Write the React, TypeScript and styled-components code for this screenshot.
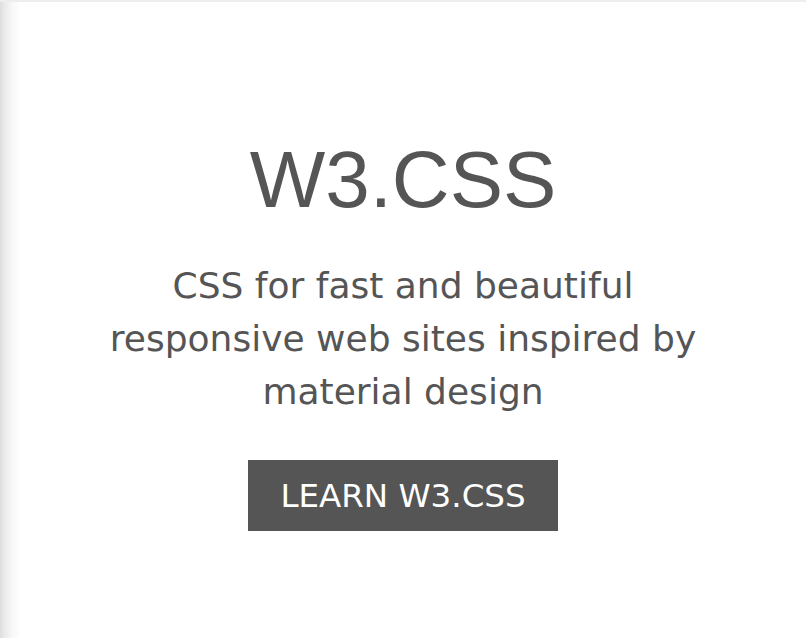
import React from "react";
import styled, { createGlobalStyle } from "styled-components";

const Global = createGlobalStyle`
  html, body {
    margin: 0;
    padding: 0;
    background: #ffffff;
  }
  * { box-sizing: border-box; }
`;

const Page = styled.main`
  min-height: 638px;
  border-top: 2px solid #eeeeee;
  background: linear-gradient(to right, #dedede 0px, #ebebeb 5px, #f7f7f7 12px, #ffffff 21px);
  display: flex;
  flex-direction: column;
  align-items: center;
  padding-top: 130px;
  color: #555555;
  text-align: center;
`;

const Title = styled.h1`
  margin: 0;
  font-family: "Liberation Sans", Arial, sans-serif;
  font-weight: 400;
  font-size: 80px;
  line-height: 96px;
  color: #555555;
`;

const Tagline = styled.p`
  margin: 31px 0 0;
  max-width: 640px;
  font-family: "DejaVu Sans", Verdana, sans-serif;
  font-size: 36px;
  line-height: 53px;
  color: #555555;
`;

const Button = styled.button`
  margin-top: 42px;
  border: none;
  background: #555555;
  color: #ffffff;
  font-family: "DejaVu Sans", Verdana, sans-serif;
  font-size: 32.5px;
  line-height: 47px;
  padding: 13px 32px 11px;
  cursor: pointer;
`;

export default function App() {
  return (
    <>
      <Global />
      <Page>
        <Title>W3.CSS</Title>
        <Tagline>
          CSS for fast and beautiful responsive web sites inspired by material design
        </Tagline>
        <Button>LEARN W3.CSS</Button>
      </Page>
    </>
  );
}
